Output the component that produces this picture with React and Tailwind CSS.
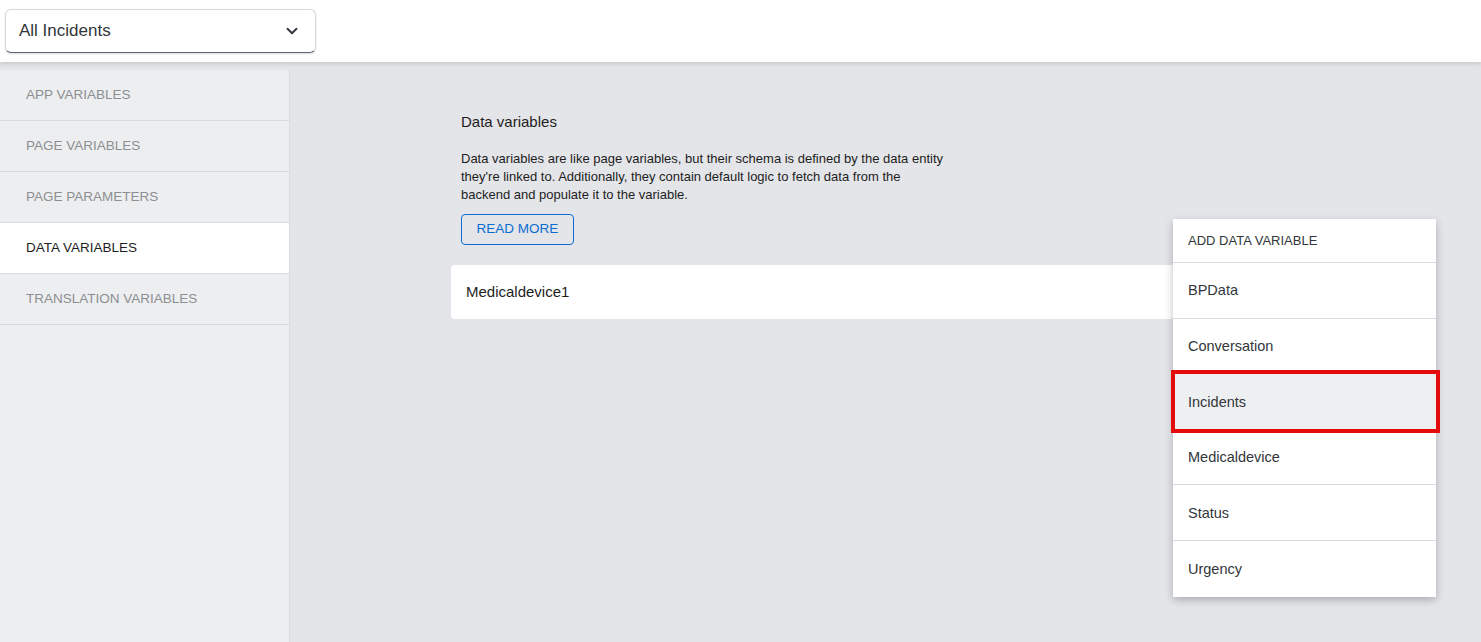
import { ChevronDown } from "lucide-react";

const navItems = [
  { label: "APP VARIABLES" },
  { label: "PAGE VARIABLES" },
  { label: "PAGE PARAMETERS" },
  { label: "DATA VARIABLES", active: true },
  { label: "TRANSLATION VARIABLES" },
];

const entities = ["BPData", "Conversation", "Incidents", "Medicaldevice", "Status", "Urgency"];

export default function App() {
  return (
    <div
      className="w-[1481px] h-[642px] overflow-hidden flex flex-col bg-[#e4e5e9] text-[#32363a]"
      style={{ fontFamily: '"Liberation Sans", Arial, sans-serif' }}
    >
      {/* Top bar */}
      <div className="h-[62px] shrink-0 bg-white shadow-[0_2px_4px_rgba(0,0,0,0.12)] relative z-10 flex items-start pt-[9px] pl-[5px]">
        <div className="w-[311px] h-[44px] rounded-[6px] border border-[#d5d7da] border-b-[#5b6573] shadow-[0_1px_2px_rgba(0,0,0,0.15)] flex items-center justify-between pl-[13px] pr-[14px]">
          <span className="text-[17px] text-[#32363a]">All Incidents</span>
          <ChevronDown size={18} strokeWidth={2.5} className="text-[#32363a]" />
        </div>
      </div>

      <div className="flex flex-1 mt-[8px]">
        {/* Sidebar */}
        <div className="w-[290px] shrink-0 bg-[#edeef0] border-r border-[#dcdde0]">
          {navItems.map((item) => (
            <div
              key={item.label}
              className={`h-[51px] flex items-center pl-[26px] border-b border-[#d9dadd] text-[13.5px] ${
                item.active ? "bg-white text-[#1d1d1d]" : "text-[#8c8e92]"
              }`}
            >
              {item.label}
            </div>
          ))}
        </div>

        {/* Main */}
        <div className="flex-1 relative pl-[161px] pt-[42px]">
          <div className="pl-[10px]">
            <h2 className="text-[15px] text-[#1d1d1d] leading-[20px]">Data variables</h2>
            <p className="mt-[18px] w-[488px] text-[13px] leading-[18px] text-[#1d1d1d]">
              Data variables are like page variables, but their schema is defined by the data entity
              they're linked to. Additionally, they contain default logic to fetch data from the
              backend and populate it to the variable.
            </p>
            <button className="mt-[10px] h-[31px] w-[113px] rounded-[4px] border border-[#0a6ed1] text-[#0a6ed1] text-[13.5px] bg-transparent">
              READ MORE
            </button>
          </div>
          <div className="mt-[20px] w-[870px] h-[54px] bg-white rounded-[4px] flex items-center pl-[15px] text-[15px] text-[#1d1d1d]">
            Medicaldevice1
          </div>

          {/* Add data variable menu */}
          <div className="absolute left-[883px] top-[149px] w-[263px] bg-white shadow-[0_3px_8px_rgba(0,0,0,0.25)]">
            <div className="h-[44px] flex items-center pl-[15px] text-[13px] text-[#32363a] border-b border-[#d9dadd]">
              ADD DATA VARIABLE
            </div>
            {entities.map((name, i) => (
              <div
                key={name}
                className={`h-[55.6px] flex items-center pl-[15px] pt-[2px] text-[14.5px] text-[#32363a] ${
                  i < entities.length - 1 ? "border-b border-[#d9dadd]" : ""
                } ${name === "Incidents" ? "bg-[#eeeff1] relative" : ""}`}
              >
                {name}
                {name === "Incidents" && (
                  <div className="absolute -left-[2px] -right-[4px] -top-[4px] -bottom-[4px] border-[4px] border-[#e30b0b]" />
                )}
              </div>
            ))}
          </div>
        </div>
      </div>
    </div>
  );
}
